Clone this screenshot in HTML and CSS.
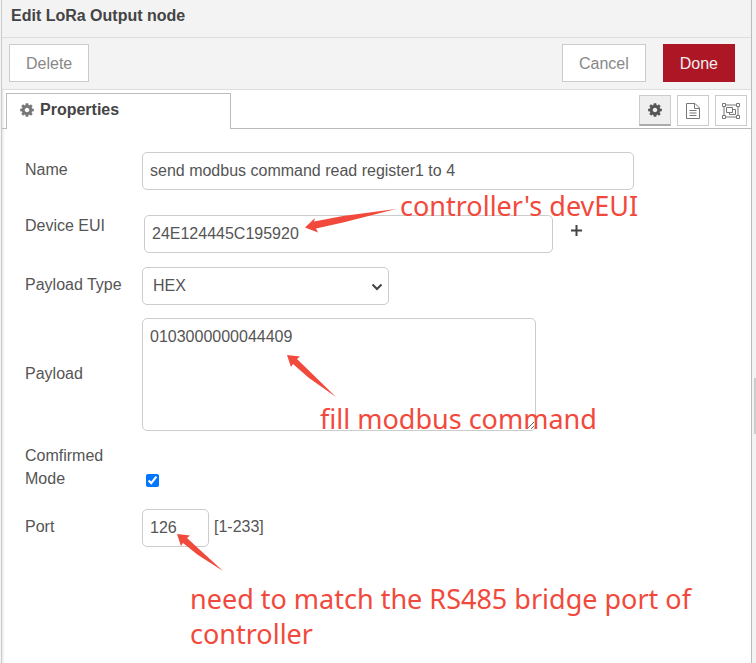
FILE: index.html
```html
<!DOCTYPE html>
<html lang="en">
<head>
    <meta charset="UTF-8">
    <meta name="viewport" content="width=device-width, initial-scale=1.0">
    <title>Edit LoRa Output node</title>
    <link rel="stylesheet" href="styles.css">
</head>
<body>

<!-- Shared icons -->
<svg class="icon-defs" width="0" height="0">
    <symbol id="icon-cog" viewBox="0 0 1792 1792">
        <path d="M1152 896q0-106-75-181t-181-75-181 75-75 181 75 181 181 75 181-75 75-181zm512-109v222q0 12-8 23t-20 13l-185 28q-19 54-39 91 35 50 107 138 10 12 10 25t-9 23q-27 37-99 108t-94 71q-12 0-26-9l-138-108q-44 23-91 38-16 136-29 186-7 28-36 28h-222q-14 0-24.500-8.500t-11.500-21.500l-28-184q-49-16-90-37l-141 107q-10 9-25 9-14 0-25-11-126-114-165-168-7-10-7-23 0-12 8-23 15-21 51-66.500t54-70.500q-27-50-41-99l-183-27q-13-2-21-12.500t-8-23.500v-222q0-12 8-23t19-13l186-28q14-46 39-92-40-57-107-138-10-12-10-24 0-10 9-23 26-36 98.500-107.500t94.500-71.500q13 0 26 10l138 107q44-23 91-38 16-136 29-186 7-28 36-28h222q14 0 24.500 8.500t11.500 21.500l28 184q49 16 90 37l142-107q9-9 24-9 13 0 25 10 129 119 165 170 7 8 7 22 0 12-8 23-15 21-51 66.500t-54 70.500q26 50 41 98l183 28q13 2 21 12.500t8 23.500z"/>
    </symbol>
</svg>

<div class="editor">
    <main class="tray">
        <h1 class="tray-header">Edit LoRa Output node</h1>

        <div class="tray-toolbar">
            <button type="button" class="btn btn-delete">Delete</button>
            <button type="button" class="btn">Cancel</button>
            <button type="button" class="btn btn-primary">Done</button>
        </div>

        <div class="tabs">
            <button type="button" class="tab">
                <svg class="icon" width="16" height="16"><use href="#icon-cog"/></svg>
                Properties
            </button>
            <div class="tab-buttons">
                <button type="button" class="icon-btn selected" aria-label="Properties">
                    <svg class="icon" width="16" height="16"><use href="#icon-cog"/></svg>
                </button>
                <button type="button" class="icon-btn" aria-label="Description">
                    <svg class="icon-line" width="14" height="16" viewBox="0 0 14 16">
                        <path d="M.5.5h8.500l4.500 4.500v10.500H.5zM8.500.5v5h5M3.500 7.500h7M3.500 10h7M3.500 12.500h7"/>
                    </svg>
                </button>
                <button type="button" class="icon-btn" aria-label="Appearance">
                    <svg class="icon-line" width="18" height="16" viewBox="0 0 18 16">
                        <path d="M3.500 2h11M3.500 14h11M2 3.500v9M16 3.500v9M.5.5h3v3h-3zM14.500.5h3v3h-3zM.5 12.500h3v3h-3zM14.500 12.500h3v3h-3zM4.500 4.500h6v5h-6zM10.500 6.500h3v5h-6v-2"/>
                    </svg>
                </button>
            </div>
        </div>

        <form class="node-form">
            <div class="form-row">
                <label for="name">Name</label>
                <input type="text" id="name" class="input-name" value="send modbus command read register1 to 4">
            </div>

            <div class="form-row row-eui">
                <label for="eui">Device EUI</label>
                <input type="text" id="eui" class="input-eui" value="24E124445C195920">
                <button type="button" class="btn-add" aria-label="Add">
                    <svg width="11" height="11" viewBox="0 0 11 11"><path d="M0 5.500h11M5.500 0v11"/></svg>
                </button>
                <svg class="arrow arrow-eui" width="92" height="26" viewBox="0 0 92 26">
                    <path d="M0 18.500L10 9 9 12.500 38 7 91 0 38 13.500 11 19.500l2 4z"/>
                </svg>
                <span class="note note-eui">controller's devEUI</span>
            </div>

            <div class="form-row">
                <label for="type">Payload Type</label>
                <div class="select-wrap">
                    <select id="type">
                        <option>HEX</option>
                    </select>
                    <svg class="chevron" width="12" height="8" viewBox="0 0 12 8"><path d="M1.500 1.500L6 6l4.500-4.500"/></svg>
                </div>
            </div>

            <div class="form-row">
                <label for="payload">Payload</label>
                <textarea id="payload">0103000000044409</textarea>
                <svg class="arrow arrow-payload" width="50" height="43" viewBox="0 0 50 43">
                    <path d="M0 0l13 1.500-3 2.500L49 42 22 23 6 9 4 12z"/>
                </svg>
                <span class="note note-payload">fill modbus command</span>
            </div>

            <div class="form-row row-mode">
                <label for="mode">Comfirmed Mode</label>
                <input type="checkbox" id="mode" checked>
            </div>

            <div class="form-row">
                <label for="port">Port</label>
                <input type="text" id="port" class="input-port" value="126">
                <span class="hint">[1-233]</span>
                <svg class="arrow arrow-port" width="47" height="38" viewBox="0 0 47 38">
                    <path d="M0 0l13 1.500-3 2.500L46 37 21 21 6 9 4 12z"/>
                </svg>
                <span class="note note-port">need to match the RS485 bridge port of controller</span>
            </div>
        </form>
    </main>
    <div class="gutter"><div class="handle"></div></div>
</div>

</body>
</html>
```
FILE: styles.css
```css
* {
    box-sizing: border-box;
}
body {
    margin: 0;
    background-color: #f3f3f3;
    font-family: Arial, "Liberation Sans", sans-serif;
    font-size: 16px;
    line-height: 23px;
    color: #555;
}
button, input, select, textarea {
    font: inherit;
    color: inherit;
    margin: 0;
}
button {
    cursor: pointer;
}
.icon-defs {
    position: absolute;
}
.editor {
    display: flex;
    min-height: 100vh;
    padding-left: 1px;
}
.tray {
    flex: 1;
    background-color: #fff;
    border-left: 1px solid #ccc;
    border-right: 1px solid #bbb;
    box-shadow: inset 3px 0 3px -2px rgba(0,0,0,0.12);
}
.tray-header {
    margin: 0;
    padding: 4px 9px 10px;
    font-size: 16px;
    color: #444;
    background-color: #f3f3f3;
    border-bottom: 1px solid #ddd;
}
.tray-toolbar {
    display: flex;
    gap: 17px;
    padding: 6px 16px 7px 7px;
    background-color: #f3f3f3;
    border-bottom: 1px solid #ddd;
}
.btn {
    height: 38px;
    padding: 0 16px;
    background-color: #fff;
    border: 1px solid #ccc;
    color: #888;
}
.btn-delete {
    margin-right: auto;
}
.btn-primary {
    background-color: #ad1625;
    border-color: #ad1625;
    color: #eee;
}

/* Tab bar */
.tabs {
    display: flex;
    justify-content: space-between;
    padding: 3px 4px 0;
    border-bottom: 1px solid #bbb;
}
.tab {
    display: flex;
    align-items: center;
    gap: 5px;
    width: 225px;
    height: 36px;
    margin-bottom: -1px;
    padding: 0 12px 4px;
    background-color: #fff;
    border: 1px solid #bbb;
    border-bottom: none;
    font-weight: bold;
    color: #444;
}
.tab .icon {
    fill: #777;
}
.tab-buttons {
    display: flex;
    gap: 6px;
    padding-top: 2px;
}
.icon-btn {
    display: flex;
    align-items: center;
    justify-content: center;
    width: 32px;
    height: 31px;
    padding: 0;
    background-color: #fff;
    border: 1px solid #ccc;
}
.icon-btn.selected {
    background-color: #efefef;
    border-bottom: 2px solid #aaa;
}
.icon {
    fill: #555;
}
.icon-line {
    fill: none;
    stroke: #777;
}

/* Node form */
.node-form {
    display: flex;
    flex-direction: column;
    gap: 13px;
    padding: 23px;
}
.form-row {
    position: relative;
    display: flex;
    align-items: center;
}
.form-row label {
    flex: none;
    width: 117px;
    padding-bottom: 3px;
}
.form-row input[type="text"], select, textarea {
    height: 38px;
    padding: 0 7px;
    background-color: #fff;
    border: 1px solid #ccc;
    border-radius: 5px;
}
.form-row .input-name {
    width: 492px;
}
.row-eui {
    align-items: flex-end;
    height: 51px;
    padding-bottom: 1px;
}
.row-eui label {
    align-self: flex-start;
    width: 119px;
    padding-top: 11px;
}
.form-row .input-eui {
    width: 409px;
}
.btn-add {
    align-self: center;
    margin-left: 18px;
    padding: 4px 0 0;
    background: none;
    border: none;
}
.btn-add svg {
    display: block;
    stroke: #444;
    stroke-width: 2;
}
.select-wrap {
    position: relative;
    width: 247px;
}
.select-wrap select {
    display: block;
    width: 100%;
    padding: 0 26px 2px 10px;
    appearance: none;
}
.chevron {
    position: absolute;
    top: 16px;
    right: 6px;
    fill: none;
    stroke: #444;
    stroke-width: 2;
    pointer-events: none;
}
.form-row textarea {
    width: 394px;
    height: 113px;
    padding: 6px 7px;
}
.row-mode {
    align-items: flex-end;
    padding-bottom: 3px;
}
.row-mode label {
    padding-right: 20px;
}
.row-mode input {
    width: 13px;
    height: 13px;
    margin: 0 4px 6px;
}
.form-row .input-port {
    width: 67px;
}
.hint {
    padding: 0 5px 3px;
}

/* Notes drawn over the form */
.note {
    position: absolute;
    font-family: "Noto Sans", sans-serif;
    font-size: 27px;
    line-height: 35px;
    color: #f2493d;
}
.arrow {
    position: absolute;
    fill: #f2493d;
}
.arrow-eui {
    left: 280px;
    top: 6px;
}
.note-eui {
    left: 375px;
    top: -15px;
}
.arrow-payload {
    left: 262px;
    top: 37px;
}
.note-payload {
    left: 295px;
    top: 83px;
}
.arrow-port {
    left: 152px;
    top: 25px;
}
.note-port {
    left: 165px;
    top: 72px;
    width: 520px;
}

.gutter {
    position: relative;
    width: 4px;
}
.handle {
    position: absolute;
    top: 57%;
    right: 0;
    width: 2px;
    height: 56px;
    background-color: #ccc;
}
```
